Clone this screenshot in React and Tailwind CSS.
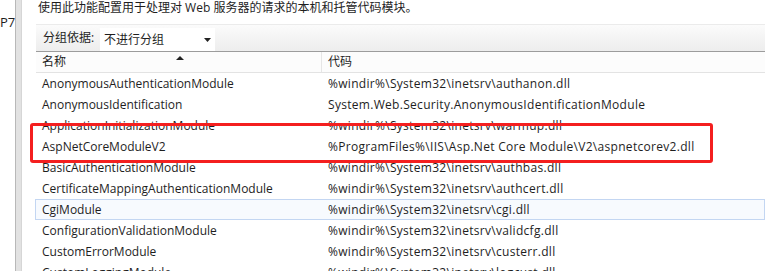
const rows = [
  ["AnonymousAuthenticationModule", "%windir%\\System32\\inetsrv\\authanon.dll"],
  ["AnonymousIdentification", "System.Web.Security.AnonymousIdentificationModule"],
  ["ApplicationInitializationModule", "%windir%\\System32\\inetsrv\\warmup.dll"],
  ["AspNetCoreModuleV2", "%ProgramFiles%\\IIS\\Asp.Net Core Module\\V2\\aspnetcorev2.dll"],
  ["BasicAuthenticationModule", "%windir%\\System32\\inetsrv\\authbas.dll"],
  ["CertificateMappingAuthenticationModule", "%windir%\\System32\\inetsrv\\authcert.dll"],
  ["CgiModule", "%windir%\\System32\\inetsrv\\cgi.dll"],
  ["ConfigurationValidationModule", "%windir%\\System32\\inetsrv\\validcfg.dll"],
  ["CustomErrorModule", "%windir%\\System32\\inetsrv\\custerr.dll"],
  ["CustomLoggingModule", "%windir%\\System32\\inetsrv\\logcust.dll"],
];

export default function App() {
  return (
    <div className="relative flex w-[765px] h-[271px] overflow-hidden bg-white text-[12px] text-[#1e1e1e] font-['Open_Sans','Noto_Sans_CJK_SC',sans-serif]">
      {/* left pane edge */}
      <div className="w-[15px] shrink-0 overflow-hidden whitespace-nowrap pt-[13px] text-[13px]">P7</div>
      <div className="w-[7px] shrink-0 bg-[#e2e2e2] border-l border-[#b8b8b8] border-r border-r-[#d6d6d6]" />

      <div className="flex-1 pl-[14px] flex flex-col">
        {/* description */}
        <div className="h-[24px] shrink-0 pl-[2px] leading-[16px] whitespace-nowrap">
          使用此功能配置用于处理对 Web 服务器的请求的本机和托管代码模块。
        </div>

        {/* group by toolbar */}
        <div className="h-[28px] shrink-0 flex items-center border-t border-[#ebebeb] bg-gradient-to-b from-[#fbfbfb] to-[#ededed] border-b border-b-[#9c9c9c]">
          <span className="pl-[7px] w-[64px] shrink-0">分组依据:</span>
          <div className="self-end h-[23px] w-[115px] bg-white flex items-center justify-between pl-[4px] pr-[4px]">
            <span>不进行分组</span>
            <svg width="7" height="4" viewBox="0 0 7 4"><path d="M0 0h7L3.5 4z" fill="#222" /></svg>
          </div>
        </div>

        {/* header */}
        <div className="relative h-[21px] shrink-0 flex bg-[#fcfcfc] border-b border-[#e3e3e3]">
          <div className="w-[286px] shrink-0 pl-[6px] leading-[20px] border-r border-[#e6e6e6]">名称</div>
          <div className="pl-[6px] leading-[20px]">代码</div>
          <svg className="absolute left-[140px] top-[4px]" width="8" height="4" viewBox="0 0 8 4"><path d="M0 4h8L4 0z" fill="#222" /></svg>
        </div>

        {/* rows */}
        <div className="flex flex-col shrink-0">
          {rows.map(([name, code]) => (
            <div
              key={name}
              className={
                name === "CgiModule"
                  ? "h-[21px] shrink-0 flex items-center whitespace-nowrap bg-[#f7fafe] border border-[#c3d6f2] -ml-px"
                  : "h-[21px] shrink-0 flex items-center whitespace-nowrap"
              }
            >
              <div className="w-[286px] shrink-0 pl-[6px]">{name}</div>
              <div className="pl-[6px] tracking-[0.3px]">{code}</div>
            </div>
          ))}
        </div>
      </div>

      {/* red highlight */}
      <div className="absolute left-[30px] top-[123px] w-[683px] h-[40px] border-[3px] border-[#f41f1f] rounded-[3px]" />
    </div>
  );
}
